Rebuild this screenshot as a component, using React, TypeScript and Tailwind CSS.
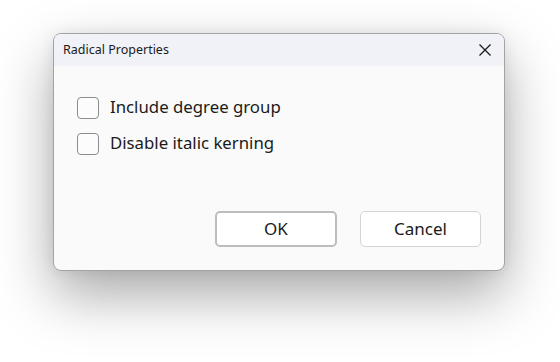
import React from "react";

export default function App() {
  const font = { fontFamily: '"Noto Sans", "Open Sans", sans-serif' };
  return (
    <div className="w-[560px] h-[362px] bg-white pt-[33px] pl-[53px]" style={font}>
      <div className="w-[452px] h-[238px] rounded-[8px] border border-[#a3a3a3] overflow-hidden flex flex-col bg-[#fafafa] shadow-[0_24px_56px_rgba(0,0,0,0.34),0_0_14px_rgba(0,0,0,0.08)]">
        <div className="h-[32px] bg-[#f1f2f7] flex items-center justify-between pl-[9px] pr-[13px]">
          <span className="text-[12.5px] text-[#1a1a1a]">Radical Properties</span>
          <svg width="12" height="12" viewBox="0 0 12 12">
            <path d="M0.5 0.5 L11.5 11.5 M11.5 0.5 L0.5 11.5" stroke="#1a1a1a" strokeWidth="1.3" fill="none" />
          </svg>
        </div>
        <div className="flex flex-col gap-[15px] pt-[31px] pl-[23px]">
          {["Include degree group", "Disable italic kerning"].map((t) => (
            <div key={t} className="flex items-center gap-[11px] h-[21px]">
              <div className="w-[22px] h-[22px] rounded-[4px] border-[1.5px] border-[#8c8c8c] bg-[#fcfcfc]" />
              <span className="text-[16.8px] text-[#1a1a1a] leading-none">{t}</span>
            </div>
          ))}
        </div>
        <div className="mt-auto flex justify-end gap-[23px] pr-[23px] pb-[23px]">
          <button className="w-[122px] h-[36px] rounded-[5px] border-2 border-[#bdbdbd] bg-white text-[17px] text-[#1a1a1a]">OK</button>
          <button className="w-[121px] h-[36px] rounded-[5px] border border-[#d4d4d4] bg-white text-[17px] text-[#1a1a1a]">Cancel</button>
        </div>
      </div>
    </div>
  );
}
